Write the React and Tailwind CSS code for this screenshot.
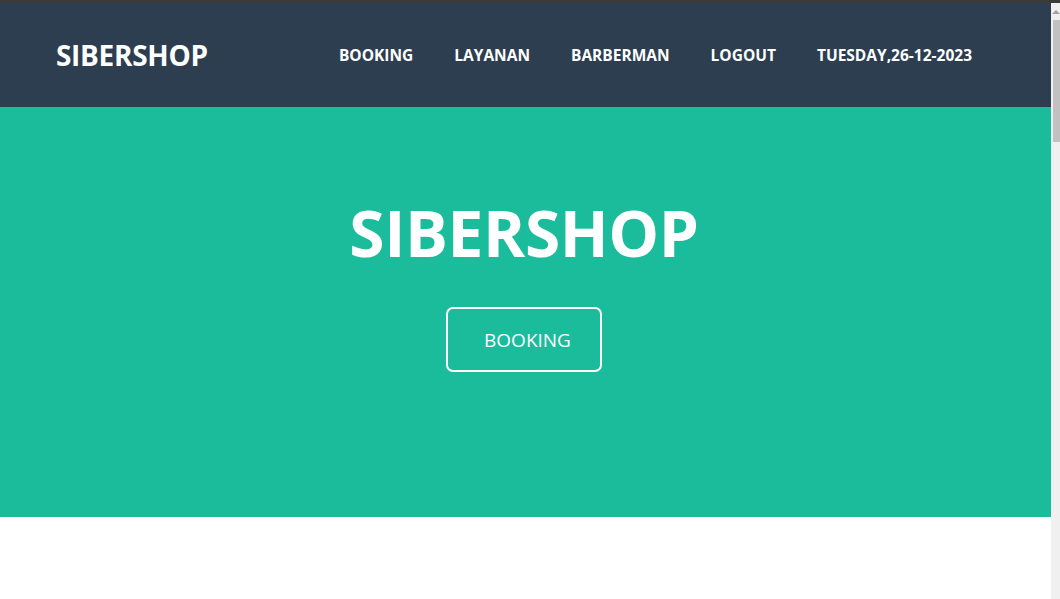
import React from 'react';

const links = ['BOOKING', 'LAYANAN', 'BARBERMAN', 'LOGOUT', 'TUESDAY,26-12-2023'];

const App = () => {
  return (
    <div className="flex h-[599px] w-[1060px] flex-col overflow-hidden bg-white" style={{ fontFamily: '"Open Sans", "Noto Sans", sans-serif' }}>
      <div className="h-[3px] w-full bg-[#3b3b3b]" />
      <div className="flex flex-1">
        <div className="flex flex-1 flex-col">
          {/* navbar */}
          <nav className="flex h-[104px] items-center bg-[#2c3e50] pl-[56px] pr-[79px]">
            <h1 className="text-[28px] font-bold tracking-[-0.3px] text-white">SIBERSHOP</h1>
            <ul className="ml-auto mt-[2px] flex gap-[41px]">
              {links.map((l) => (
                <li key={l} className="text-[15.5px] font-bold text-white">{l}</li>
              ))}
            </ul>
          </nav>

          {/* hero */}
          <section className="flex h-[410px] flex-col items-center bg-[#1abc9c] pt-[86px]">
            <h2 className="mr-[3px] text-[64px] font-bold leading-[80px] tracking-[-0.4px] text-white">SIBERSHOP</h2>
            <button className="mr-[3px] mt-[34px] h-[65px] w-[156px] rounded-[7px] border-2 border-white pl-[7px] pt-[2px] text-[19px] text-white">
              BOOKING
            </button>
          </section>

          <div className="flex-1 bg-white" />
        </div>

        {/* scrollbar */}
        <div className="flex w-[9px] flex-col items-center bg-[#f0f0f0]">
          <div className="mt-[7px] h-0 w-0 border-x-[4px] border-b-[4px] border-x-transparent border-b-[#a3a3a3]" />
          <div className="mt-[6px] h-[122px] w-[7px] self-end bg-[#c1c1c1]" />
        </div>
      </div>
    </div>
  );
};

export default App;
